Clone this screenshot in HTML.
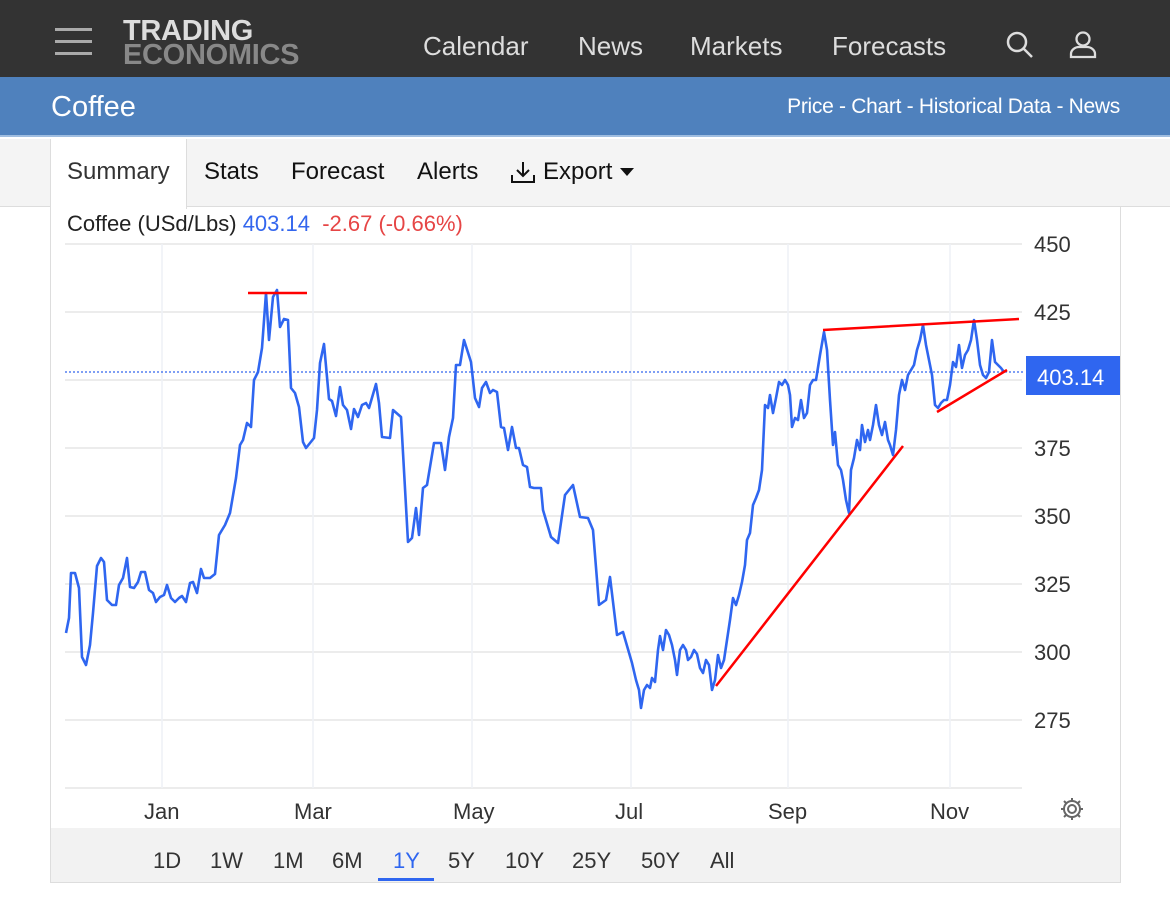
<!DOCTYPE html>
<html><head><meta charset="utf-8"><style>
*{margin:0;padding:0;box-sizing:border-box}
body{width:1170px;height:901px;background:#fff;font-family:"Liberation Sans",Arial,sans-serif;position:relative;overflow:hidden}
.top{position:absolute;left:0;top:0;width:1170px;height:77px;background:#333}
.ham{position:absolute;left:55px;width:37px;height:3px;background:#aaa}
.logo{position:absolute;left:123px;top:19px;font-weight:bold;font-size:29px;line-height:24px;letter-spacing:-0.3px}
.nav{position:absolute;top:31px;color:#ddd;font-size:26px}
.band{position:absolute;left:0;top:77px;width:1170px;height:60px;background:#4f81bd;border-bottom:2px solid #9fbde0}
.tabs{position:absolute;left:0;top:139px;width:1170px;height:68px;background:#f4f4f4;border-bottom:1px solid #ddd}
.tab{position:absolute;top:158px;font-size:24px;color:#111}
.rng{position:absolute;top:848px;font-size:22px;color:#333}
</style></head><body>
<div class="top">
<div class="ham" style="top:28px"></div><div class="ham" style="top:40px"></div><div class="ham" style="top:52px"></div>
<div class="logo"><div style="color:#ddd">TRADING</div><div style="color:#888">ECONOMICS</div></div>
<div class="nav" style="left:423px">Calendar</div>
<div class="nav" style="left:578px">News</div>
<div class="nav" style="left:690px">Markets</div>
<div class="nav" style="left:832px">Forecasts</div>
<svg style="position:absolute;left:1005px;top:30px" width="30" height="30" viewBox="0 0 30 30"><circle cx="12" cy="12" r="9" fill="none" stroke="#ddd" stroke-width="2.5"/><path d="M19 19l8 8" stroke="#ddd" stroke-width="2.5"/></svg>
<svg style="position:absolute;left:1068px;top:29px" width="30" height="30" viewBox="0 0 30 30"><circle cx="15" cy="10" r="6.5" fill="none" stroke="#ddd" stroke-width="2.3"/><path d="M3 28v-3c0-4 4-7 8-7h8c4 0 8 3 8 7v3z" fill="none" stroke="#ddd" stroke-width="2.3"/></svg>
</div>
<div class="band">
<div style="position:absolute;left:51px;top:14px;font-size:29px;color:#fff">Coffee</div>
<div style="position:absolute;right:50px;top:18px;font-size:21px;color:#fff;letter-spacing:-0.3px">Price - Chart - Historical Data - News</div>
</div>
<div class="tabs"></div>
<div style="position:absolute;left:50px;top:139px;width:137px;height:70px;background:#fff;border-left:1px solid #ddd;border-right:1px solid #ddd"></div>
<div class="tab" style="left:67px;color:#333">Summary</div>
<div class="tab" style="left:204px">Stats</div>
<div class="tab" style="left:291px">Forecast</div>
<div class="tab" style="left:417px">Alerts</div>
<svg style="position:absolute;left:510px;top:160px" width="26" height="24" viewBox="0 0 26 24"><path d="M13 2v14M7 10l6 6 6-6M2 15v7h22v-7" fill="none" stroke="#111" stroke-width="2"/></svg>
<div class="tab" style="left:543px">Export</div>
<svg style="position:absolute;left:620px;top:168px" width="14" height="8"><path d="M0 0h14L7 8z" fill="#111"/></svg>
<div style="position:absolute;left:50px;top:207px;width:1071px;height:676px;border:1px solid #ddd;border-top:none"></div>
<div style="position:absolute;left:51px;top:828px;width:1069px;height:54px;background:#f2f2f2"></div>
<div style="position:absolute;left:67px;top:211px;font-size:22px;color:#222">Coffee (USd/Lbs) <span style="color:#3366ee">403.14</span> &nbsp;<span style="color:#e64545">-2.67 (-0.66%)</span></div>
<svg style="position:absolute;left:0;top:0" width="1170" height="901">
<g stroke="#e6e6e6" stroke-width="1.5">
<path d="M65 244H1022M65 312H1022M65 380H1022M65 448H1022M65 516H1022M65 584H1022M65 652H1022M65 720H1022M65 788H1022"/>
</g>
<g stroke="#eef1f6" stroke-width="1.5"><path d="M162 244V788M313 244V788M472 244V788M631 244V788M788 244V788M950 244V788"/></g>
<path d="M65 372H1025" stroke="#3366ee" stroke-width="1.2" stroke-dasharray="2 2"/>
<polyline fill="none" stroke="#2f66f0" stroke-width="2.6" stroke-linejoin="round" points="66,633 69,618 71,573 75,573 79,588 82,657 86,665 90,645 93,613 97,566 101,558 104,562 107,600 112,605 116,605 119,585 123,578 127,558 130,587 134,588 138,582 141,572 145,572 149,590 153,593 156,602 160,597 164,595 167,585 171,598 175,602 179,598 182,596 186,602 190,583 193,582 197,593 201,569 204,578 210,578 215,574 219,535 225,525 230,513 236,478 240,445 243,440 247,423 251,427 254,380 258,372 262,348 266,293 269,340 273,297 277,290 280,327 284,319 288,320 291,388 295,393 299,407 303,442 306,448 314,438 317,410 320,363 324,344 329,399 332,401 336,416 340,387 343,405 347,410 351,429 354,409 358,417 362,405 366,403 369,408 376,384 379,403 382,437 390,438 393,410 401,417 408,542 412,538 416,508 419,535 423,488 427,485 434,443 441,443 445,470 449,437 453,418 456,365 460,365 464,340 471,362 475,398 479,407 482,388 486,382 490,393 493,390 497,392 501,427 504,428 508,450 512,427 516,448 519,448 523,465 527,467 530,487 534,488 541,488 543,510 551,537 558,543 565,495 573,485 580,517 588,518 593,530 599,605 606,600 610,577 617,635 623,632 632,663 636,680 639,690 641,708 644,690 647,685 650,688 652,678 655,682 658,650 660,636 663,650 666,630 669,635 672,645 675,660 677,675 680,650 683,645 686,650 688,660 691,657 694,650 697,654 700,668 703,673 706,660 709,665 712,690 715,680 718,655 721,668 724,660 727,640 730,620 733,598 736,605 739,595 742,582 745,565 747,540 750,533 753,505 756,498 759,490 762,470 765,405 768,408 770,395 773,413 776,398 779,382 782,385 785,380 788,385 790,395 792,427 795,418 798,420 801,400 804,418 807,413 810,385 813,380 816,380 820,355 824,332 827,350 830,400 833,445 835,432 838,465 841,470 843,480 846,500 849,513 851,470 854,458 857,440 860,450 862,425 865,442 868,430 870,440 873,425 876,405 879,425 882,435 885,422 888,440 890,445 893,455 896,430 899,395 902,380 905,390 908,375 911,370 914,365 917,350 920,340 923,325 926,345 929,360 932,375 935,405 938,408 941,403 944,400 947,400 950,385 953,362 956,367 959,345 962,368 965,355 968,350 971,340 974,320 977,340 980,365 983,375 986,378 989,372 992,340 995,362 998,365 1001,368 1004,372"/>
<g stroke="#f00" stroke-width="2.5"><path d="M248 293H307M716 686L903 446M823 330L1019 319M937 412L1007 370"/></g>
<rect x="1026" y="356" width="94" height="39" fill="#2f66f0"/>
<text x="1037" y="385" font-size="22" fill="#fff" font-family="Liberation Sans">403.14</text>
<g font-size="22" fill="#333" font-family="Liberation Sans">
<text x="1034" y="252">450</text><text x="1034" y="320">425</text><text x="1034" y="456">375</text><text x="1034" y="524">350</text><text x="1034" y="592">325</text><text x="1034" y="660">300</text><text x="1034" y="728">275</text>
<text x="144" y="819">Jan</text><text x="294" y="819">Mar</text><text x="453" y="819">May</text><text x="615" y="819">Jul</text><text x="768" y="819">Sep</text><text x="930" y="819">Nov</text>
</g>
<g transform="translate(1072,809)" fill="none" stroke="#666" stroke-width="2"><circle r="4"/><path d="M0-11v4M0 7v4M-11 0h4M7 0h4M-8-8l3 3M5 5l3 3M-8 8l3-3M5-5l3-3"/><circle r="8"/></g>
<rect x="378" y="878" width="56" height="3" fill="#2f66f0"/>
</svg>
<div class="rng" style="left:153px">1D</div>
<div class="rng" style="left:210px">1W</div>
<div class="rng" style="left:273px">1M</div>
<div class="rng" style="left:332px">6M</div>
<div class="rng" style="left:393px;color:#2f66f0">1Y</div>
<div class="rng" style="left:448px">5Y</div>
<div class="rng" style="left:505px">10Y</div>
<div class="rng" style="left:572px">25Y</div>
<div class="rng" style="left:641px">50Y</div>
<div class="rng" style="left:710px">All</div>
</body></html>
